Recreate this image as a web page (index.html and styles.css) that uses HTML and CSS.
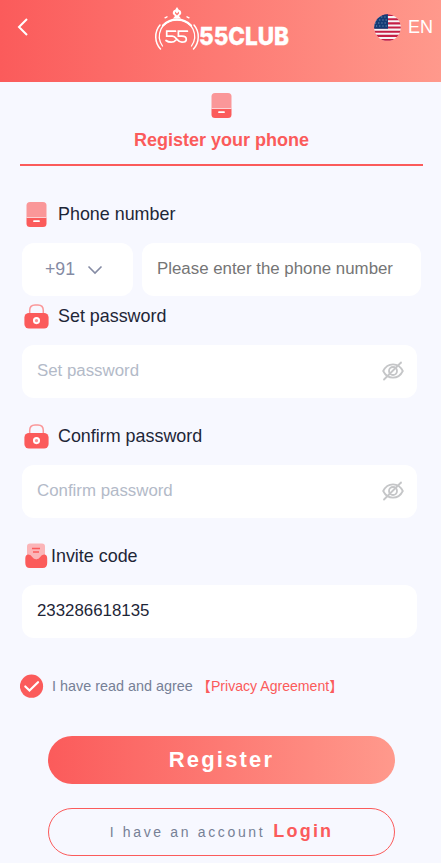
FILE: index.html
```html
<!DOCTYPE html>
<html lang="en">
<head>
<meta charset="utf-8">
<title>Register</title>
<link rel="stylesheet" href="styles.css">
</head>
<body>
<svg class="defs" width="0" height="0">
  <symbol id="phone" viewBox="0 0 21 25">
    <path d="M4 0h13q3.500 0 3.500 3.500V16H.5V3.500Q.5 0 4 0z" fill="#fa9799"/>
    <path d="M.5 16h20v5.500q0 3.500-3.500 3.500H4Q.5 25 .5 21.500z" fill="#fb5b5b"/>
    <path d="M.5 15.500h20" stroke="#fbd0d3"/>
    <rect x="7.200" y="18.200" width="6.600" height="1.800" rx=".6" fill="#fff"/>
  </symbol>
  <symbol id="lock" viewBox="0 0 25 25">
    <path d="M5.700 11V6.500Q5.700 1 11 1h3q5.300 0 5.300 5.500V11" fill="none" stroke="#fa9799" stroke-width="1.500"/>
    <rect x=".4" y="9" width="24.200" height="15.600" rx="4.500" fill="#fb5b5b"/>
    <circle cx="12.500" cy="16.600" r="2.600" fill="#fa9799" stroke="#fff" stroke-width="1.900"/>
  </symbol>
  <symbol id="eye" viewBox="0 0 22 20">
    <g fill="none" stroke="#c5c6c8" stroke-width="1.800" stroke-linecap="round">
      <path d="M1.200 10Q4.500 3.300 11 3.300T20.800 10Q17.500 16.700 11 16.700T1.200 10z"/>
      <circle cx="11" cy="10" r="4"/>
      <path d="M19 1.500 2 18.500"/>
    </g>
  </symbol>
</svg>
<header class="bar">
  <svg class="back" width="12" height="20" viewBox="0 0 12 20"><path d="M10 2 2 10l8 8" fill="none" stroke="#fff" stroke-width="2"/></svg>
  <svg class="logo" width="150" height="60" viewBox="0 0 150 60">
    <g fill="none" stroke="#fff" stroke-linecap="round">
      <path d="M6.500 42C.5 35.500 0 25 6 18M39.500 42C45.500 35.500 46 25 40 18" stroke-width="1.500"/>
      <path d="M8.500 39C1.500 29 6.500 13 23 13S44.500 29 37.500 39" stroke-width="1.300"/>
      <path d="M9 18.500Q15 12.300 23 12.300t14 6.200" stroke-width="2.200"/>
      <path d="M11 10.800l2-1M33 9.800l2 1" stroke-width="1.300"/>
      <path d="M21.500 24.200h-8.800v5h5.500c2.500 0 3.500 1.700 5 3.400s2.500 2.600 4.700 2.600q4.400 0 4.400-3t-4.400-3h-3.500v-5h9M12 33.500q2 1.700 5.200 1.700 3 0 4.500-1.900" stroke-width="1.700"/>
    </g>
    <path d="M23 0l1.800 2.700q3 .8 2.300 4.300L25 9l2 2.500h-8L21 9l-2.100-2q-.7-3.500 2.300-4.300z" fill="#fff"/>
    <path d="M21 4.500l2 2 2-2v2l-2 2-2-2z" fill="#ff7b75"/>
    <text class="brand" x="45" y="38" textLength="90" lengthAdjust="spacingAndGlyphs">55CLUB</text>
  </svg>
  <div class="lang">
    <svg width="27" height="27" viewBox="0 0 27 27">
      <clipPath id="round"><circle cx="13.500" cy="13.500" r="13.300"/></clipPath>
      <g clip-path="url(#round)">
        <path fill="#f7f3f5" d="M0 0h27v27H0z"/>
        <path d="M0 1h27M0 5.200h27M0 9.400h27M0 13.500h27M0 17.700h27M0 21.900h27M0 26h27" stroke="#c51f45" stroke-width="2.080"/>
        <path fill="#143b75" d="M0 0h14v14.700H0z"/>
        <path d="M4 3h10M2 6h12M1 9h12M2 12h12" stroke="#7f98bd" stroke-width="1.100" stroke-dasharray="1.100 2.100"/>
      </g>
    </svg>
    <span>EN</span>
  </div>
</header>
<main>
  <div class="tab">
    <svg width="21" height="25"><use href="#phone"/></svg>
    <h1>Register your phone</h1>
  </div>
  <form>
    <div class="label"><svg width="25" height="25"><use href="#phone"/></svg><label>Phone number</label></div>
    <div class="phone-row">
      <div class="code"><span>+91</span><svg width="16" height="10" viewBox="0 0 16 10"><path d="M1.500 1.500 8 8l6.500-6.500" fill="none" stroke="#858ba4" stroke-width="1.600"/></svg></div>
      <div class="box tel"><input type="tel" placeholder="Please enter the phone number"></div>
    </div>
    <div class="label tight"><svg class="lock" width="25" height="25"><use href="#lock"/></svg><label>Set password</label></div>
    <div class="box"><input class="pw" type="password" placeholder="Set password"><svg class="eye" width="22" height="20"><use href="#eye"/></svg></div>
    <div class="label"><svg class="lock" width="25" height="25"><use href="#lock"/></svg><label>Confirm password</label></div>
    <div class="box"><input class="pw" type="password" placeholder="Confirm password"><svg class="eye" width="22" height="20"><use href="#eye"/></svg></div>
    <div class="label invite">
      <svg width="25" height="26" viewBox="0 0 25 26">
        <path d="M6 .5h12q3 0 3 3V16H3V3.500q0-3 3-3z" fill="#fbb5b8"/>
        <path d="M8 5.500h8M9 9h6" stroke="#fb5b5b" stroke-width="1.500"/>
        <path d="M4.500 11.500Q7 11.500 8.200 14q1.500 2.300 4 2.300t4-2.300q1.300-2.500 3.800-2.500 3.200 0 3.200 4V20q0 5-4.500 5H5.800q-4.500 0-4.500-5v-4.500q0-4 3.200-4z" fill="#fb5b5b"/>
      </svg><label>Invite code</label>
    </div>
    <div class="box"><input type="text" value="233286618135"></div>
    <div class="agree">
      <svg width="24" height="24" viewBox="0 0 24 24"><circle cx="11.500" cy="12.200" r="11.600" fill="#fb5b5b"/><path d="M5.300 12.500l4.200 4 8.500-8.300" fill="none" stroke="#fff" stroke-width="2.200" stroke-linecap="round"/></svg>
      <span>I have read and agree</span><a>【Privacy Agreement】</a>
    </div>
    <button class="register" type="button">Register</button>
    <button class="login" type="button"><span>I have an account</span><b>Login</b></button>
  </form>
</main>
</body>
</html>
```
FILE: styles.css
```css
* { box-sizing: border-box; }
body {
  margin: 0;
  height: 863px;
  overflow: hidden;
  background: #f7f8ff;
  font-family: "Liberation Sans", "Noto Sans CJK SC", sans-serif;
  color: #1e2637;
}
svg { display: block; flex: none; }
.defs { position: absolute; }
.bar {
  height: 82px;
  padding: 0 8px 0 17px;
  display: flex;
  align-items: flex-start;
  background: linear-gradient(90deg, #fb5b5b, #ff998c);
}
.back { margin-top: 17px; }
.logo { margin: 7px 0 0 125px; overflow: visible; }
.brand { font: 800 24.500px Inter, sans-serif; fill: #fff; stroke: #fff; stroke-width: .4px; }
.lang {
  margin: 14px 0 0 auto;
  display: flex;
  align-items: center;
  gap: 7px;
  font-size: 18px;
  color: #fff;
}
.tab {
  margin: 0 18px 0 20px;
  height: 84px;
  padding-top: 11px;
  display: flex;
  flex-direction: column;
  align-items: center;
  border-bottom: 2px solid #fb5b5b;
}
.tab h1 { margin: 11px 0 0; font-size: 18px; line-height: 22px; color: #fb5b5b; }
form { padding: 29px 20px 0 22px; }
.label {
  height: 67px;
  padding: 25px 0 0 2px;
  display: flex;
  align-items: flex-start;
  gap: 9px;
  font-size: 17.900px;
  line-height: 26px;
}
.label:first-child { height: 48px; padding-top: 7px; line-height: 24px; }
.label.tight { height: 49px; padding-top: 7px; }
.label.invite { gap: 2px; }
.lock { margin-top: 1px; }
.phone-row { display: flex; gap: 9px; }
.code {
  width: 111px;
  height: 53px;
  padding-left: 23px;
  display: flex;
  align-items: center;
  gap: 12px;
  border-radius: 12px;
  background: #fff;
  color: #858ba4;
  font-size: 17.700px;
}
.box {
  width: 395px;
  height: 53px;
  padding: 0 13px 0 15px;
  display: flex;
  align-items: center;
  border-radius: 12px;
  background: #fff;
}
.box.tel { width: 279px; }
.eye { margin-top: -1px; }
input {
  flex: 1;
  min-width: 0;
  height: 40px;
  margin-bottom: 2px;
  padding: 0;
  border: 0;
  outline: 0;
  background: none;
  font: 16.850px "Liberation Sans", sans-serif;
  color: #1e2637;
}
input::placeholder { color: #757575; }
.pw::placeholder { color: #b3bac8; }
.agree {
  margin: 36px 0 0 -2px;
  height: 24px;
  display: flex;
  align-items: center;
  font-size: 14.400px;
  color: #768096;
}
.agree span { margin-left: 8px; }
.agree a { margin: -2px 0 0 4px; color: #fb5b5b; font-size: 14.100px; }
button {
  display: flex;
  align-items: center;
  justify-content: center;
  width: 347px;
  height: 48px;
  margin-left: 26px;
  padding: 0;
  border: 0;
  border-radius: 24px;
  font-family: "Liberation Sans", sans-serif;
}
.register {
  margin-top: 38px;
  background: linear-gradient(90deg, #fb5b5b, #ff998c);
  color: #fff;
  font-size: 22px;
  font-weight: 700;
  letter-spacing: 2.200px;
}
.login {
  margin-top: 24px;
  gap: 8px;
  border: 1px solid #fb5b5b;
  background: none;
  color: #768096;
  font-size: 14px;
  letter-spacing: 2.650px;
}
.login b { margin-top: -2px; color: #fb5b5b; font-size: 18px; letter-spacing: 2.200px; }
```
